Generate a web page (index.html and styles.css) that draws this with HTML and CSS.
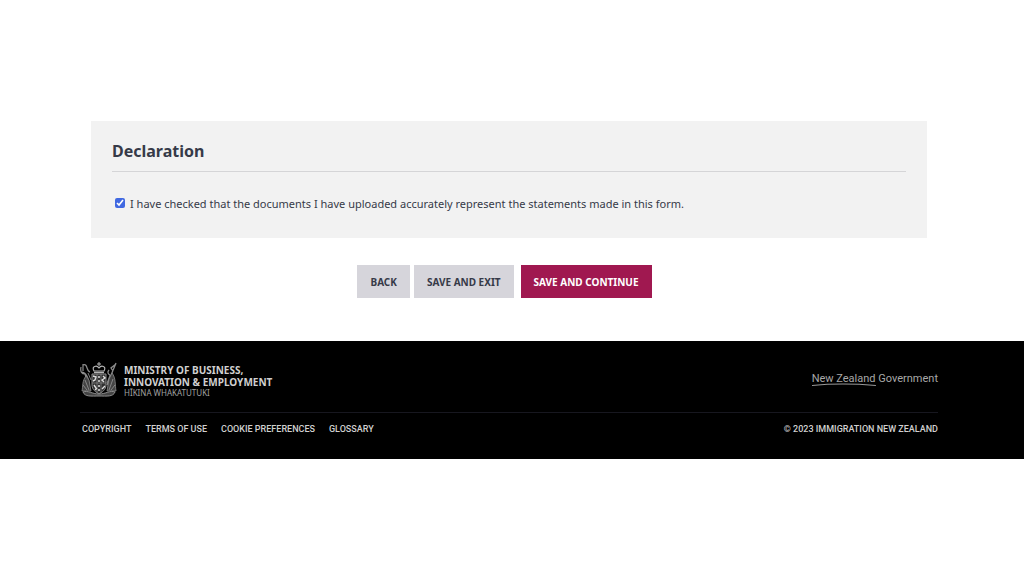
FILE: index.html
```html
<!DOCTYPE html>
<html lang="en">
<head>
    <meta charset="UTF-8">
    <meta name="viewport" content="width=device-width, initial-scale=1.0">
    <title>Declaration - Immigration New Zealand</title>
    <link rel="stylesheet" href="styles.css">
</head>
<body>
    <main>
        <form>
            <section class="panel">
                <h1>Declaration</h1>
                <div class="check-row">
                    <input type="checkbox" id="declare" checked>
                    <label for="declare">I have checked that the documents I have uploaded accurately represent the statements made in this form.</label>
                </div>
            </section>
            <div class="actions">
                <button type="button" class="btn">BACK</button>
                <button type="button" class="btn">SAVE AND EXIT</button>
                <button type="submit" class="btn btn-primary">SAVE AND CONTINUE</button>
            </div>
        </form>
    </main>
    <footer>
        <div class="brand-row">
            <a href="#" class="ministry">
                <svg class="crest" viewBox="0 0 38 36" fill="none" stroke="#8c8c8c" aria-hidden="true">
                    <!-- crown -->
                    <path d="M19 0v4M17 2h4" stroke="#b4b4b4" stroke-width="1"/>
                    <path d="M14 9c-3-5 3-6 5-3 2-3 8-2 5 3z" stroke="#b4b4b4" stroke-width="1.2"/>
                    <path d="M14 10.500h10" stroke="#b4b4b4" stroke-width="1.500"/>
                    <!-- shield -->
                    <path d="M12 12h14v11c0 5-4 7-7 9-3-2-7-4-7-9z" fill="#303030" stroke-width="1"/>
                    <path d="M17 12v19M21 12v19M12 21h14" stroke-width=".7"/>
                    <path d="M13 14l3 1-1 3-2 1M23 14l2 2-3 2 2 2M14 23l2 3M22 27l3-3M15 28l2-2" stroke="#ddd" stroke-width="1.400"/>
                    <path d="M18 15h2M18 19h2M18 24h2M18 28h2" stroke="#ddd" stroke-width="1.500"/>
                    <!-- left figure with flag -->
                    <path d="M3 2v7M1 5c-1 5 1 7 4 7l5 16M3 3c5-2 3 6 7 7M2 10c5 1 7 8 7 15" stroke-width="1.200"/>
                    <path d="M6 14c-4 5-3 10-4 15h9L9 18z" fill="#444" stroke-width=".8"/>
                    <path d="M5 18l4 10M3 23l4 5M8 11l3 7" stroke="#999" stroke-width=".8"/>
                    <!-- right figure with spear -->
                    <path d="M36 1L27 23M36 2l-5 4 2 3M29 8c-2 2-1 4 1 5" stroke-width="1.300"/>
                    <path d="M32 11c4 5 3 12 4 18h-9l2-12z" fill="#444" stroke-width=".8"/>
                    <path d="M33 17l-4 11M35 23l-4 5M30 13l-3 8" stroke="#999" stroke-width=".8"/>
                    <!-- scroll -->
                    <path d="M3 30c5-2 9 2 16 2s11-4 16-2c-2 5-8 4-16 4S5 35 3 30z" fill="#444" stroke-width="1"/>
                </svg>
                <span class="ministry-name">
                    <strong>MINISTRY OF BUSINESS,<br>INNOVATION &amp; EMPLOYMENT</strong>
                    <small>HĪKINA WHAKATUTUKI</small>
                </span>
            </a>
            <a href="#" class="govt"><span class="govt-nz">New Zealand<svg viewBox="0 0 62 4" preserveAspectRatio="none" fill="none" stroke="#999" aria-hidden="true"><path d="M0 2.500C20 .5 45 1 62 2.500"/></svg></span> Government</a>
        </div>
        <div class="link-row">
            <nav>
                <a href="#">COPYRIGHT</a>
                <a href="#">TERMS OF USE</a>
                <a href="#">COOKIE PREFERENCES</a>
                <a href="#">GLOSSARY</a>
            </nav>
            <span>© 2023 IMMIGRATION NEW ZEALAND</span>
        </div>
    </footer>
</body>
</html>
```

FILE: styles.css
```css
* {
    box-sizing: border-box;
}
body {
    margin: 0;
    background-color: #fff;
    color: #363a48;
    font-family: "Noto Sans", "Open Sans", sans-serif;
}
main {
    padding: 121px 97px 43px 91px;
}
.panel {
    background-color: #f2f2f2;
    padding: 16px 21px 24px;
}
h1 {
    margin: 0;
    padding-bottom: 6px;
    border-bottom: 1px solid #d5d5d7;
    font-size: 16px;
    line-height: 28px;
}
.check-row {
    display: flex;
    align-items: center;
    gap: 5px;
    padding: 22px 3px 0;
    font-size: 11px;
    line-height: 20px;
}
.check-row input {
    width: 10px;
    height: 10px;
    margin: 0 0 2px;
    accent-color: #4169e1;
}
.actions {
    display: flex;
    justify-content: center;
    gap: 4px;
    margin-top: 27px;
    padding-right: 9px;
}
.btn {
    height: 33px;
    padding: 0 13px;
    border: none;
    background-color: #d6d5db;
    color: #363a48;
    font-family: inherit;
    font-size: 10px;
    font-weight: bold;
    cursor: pointer;
}
.btn-primary {
    margin-left: 3px;
    background-color: #a01850;
    color: #fff;
}
footer {
    padding: 21px 86px 22px 80px;
    background-color: #000;
    color: #d0d0d0;
}
footer a {
    color: inherit;
    text-decoration: none;
}
.brand-row {
    display: flex;
    justify-content: space-between;
    align-items: center;
    padding-bottom: 14px;
    border-bottom: 1px solid #17171f;
}
.ministry {
    display: flex;
    align-items: center;
    gap: 6px;
}
.crest {
    width: 38px;
    height: 36px;
}
.ministry-name {
    padding-top: 2px;
}
.ministry-name strong {
    display: block;
    font-size: 10px;
    line-height: 12px;
}
.ministry-name small {
    display: block;
    color: #a0a0a0;
    font-size: 8px;
    line-height: 10px;
}
.govt {
    padding-bottom: 3px;
    color: #a8a8a8;
    font-family: Roboto, "Open Sans", sans-serif;
    font-size: 11px;
    line-height: 16px;
}
.govt-nz {
    position: relative;
}
.govt-nz svg {
    position: absolute;
    left: 0;
    bottom: -2px;
    width: 100%;
    height: 4px;
}
.link-row {
    display: flex;
    justify-content: space-between;
    padding: 8px 0 0 2px;
    font-family: Roboto, "Noto Sans", sans-serif;
    font-size: 9px;
    font-weight: 500;
    line-height: 16px;
}
.link-row nav {
    display: flex;
    gap: 14px;
}
```
